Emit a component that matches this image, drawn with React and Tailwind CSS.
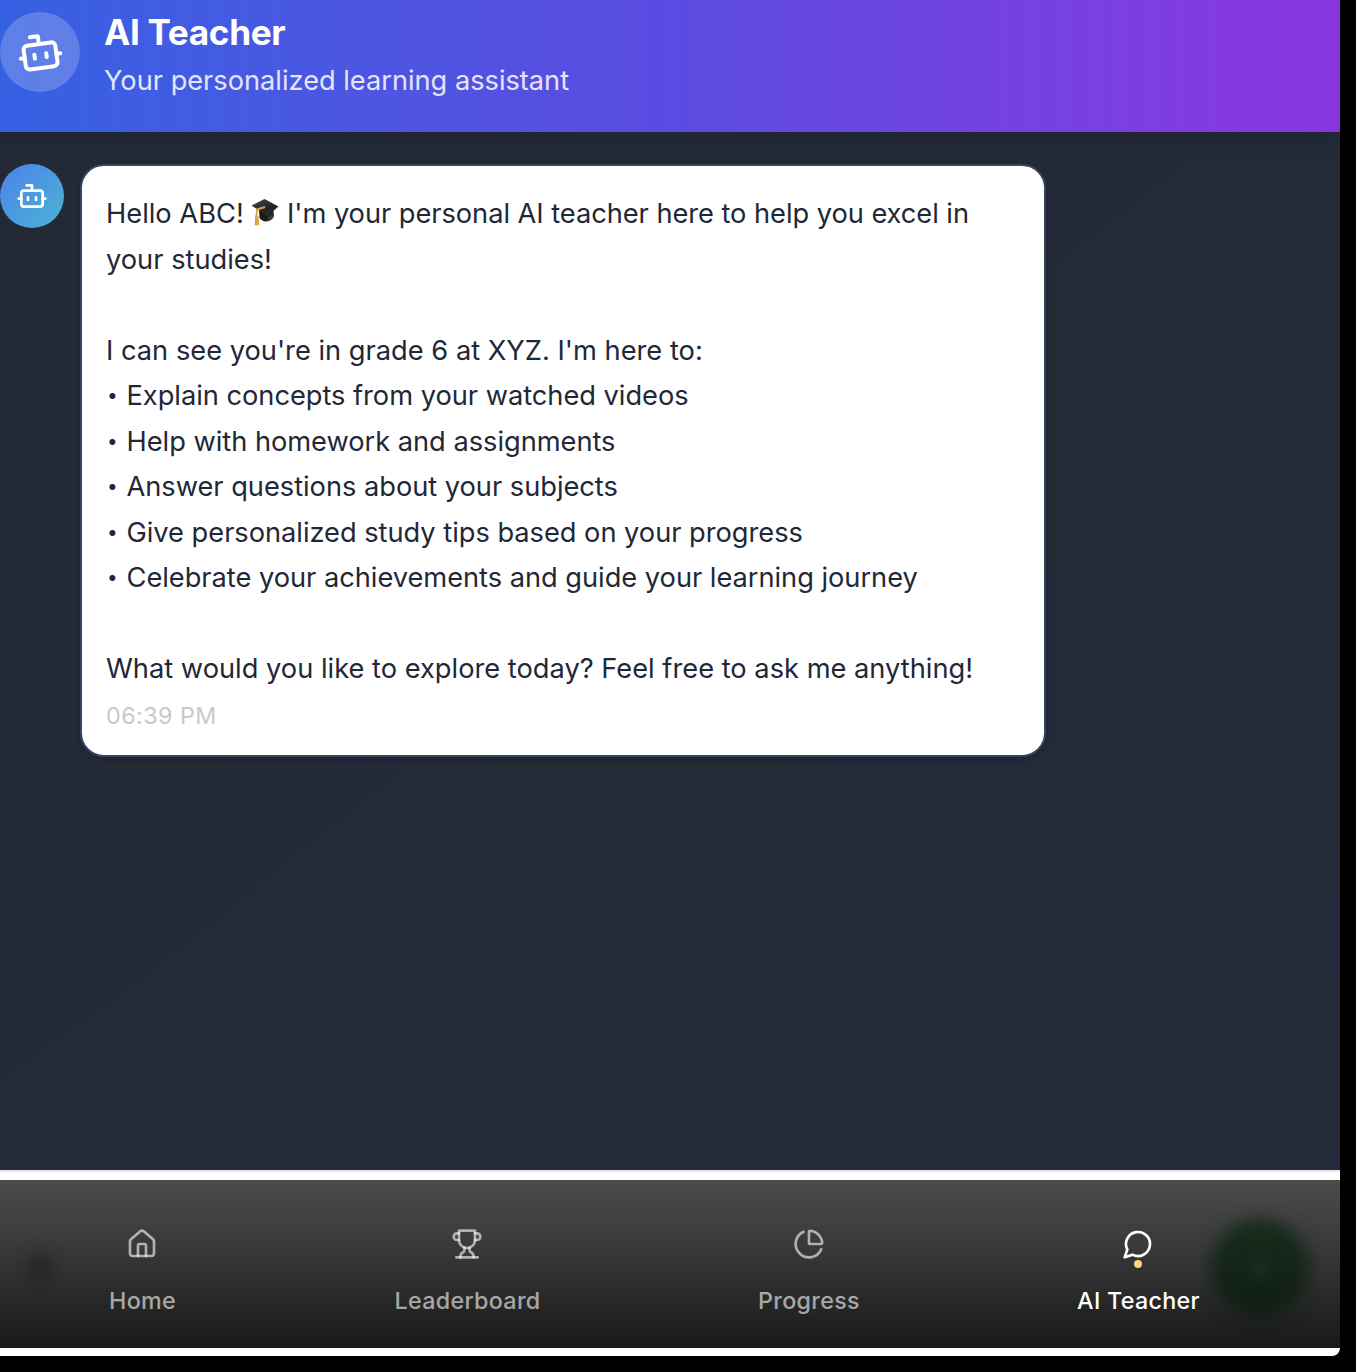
const ICON = {
  fill: "none",
  stroke: "currentColor",
  strokeLinecap: "round",
  strokeLinejoin: "round",
  viewBox: "0 0 24 24",
};

function BotIcon({ className }) {
  return (
    <svg {...ICON} strokeWidth="2" className={className}>
      <path d="M12 8V4H8" />
      <rect width="16" height="12" x="4" y="8" rx="2" />
      <path d="M2 14h2M20 14h2M15 13v2M9 13v2" />
    </svg>
  );
}

function CapIcon() {
  return (
    <svg viewBox="0 0 28 28" className="inline-block h-7 w-7 align-[-3px]">
      <defs>
        <linearGradient id="board" x1="0" y1="0" x2="1" y2="1">
          <stop offset="0" stopColor="#4a4a4a" />
          <stop offset="0.6" stopColor="#222" />
          <stop offset="1" stopColor="#333" />
        </linearGradient>
      </defs>
      <path d="M8 12l.5 8c2 3 6 4 9 3 3-.8 5-3 5-5V11z" fill="#1c1c1c" />
      <path d="M17 19l6-4v3c-1 2-3 4-6 4.500z" fill="#3a3a3a" />
      <path d="M.5 7.500L13.500 1 27.500 8.500 16.500 18z" fill="url(#board)" />
      <path d="M14 9L6 11.500 5.200 20" fill="none" stroke="#d9a03c" strokeWidth="1.900" />
      <path d="M4.200 18h3.300l.7 9.300H3.600z" fill="#dda544" />
    </svg>
  );
}

const tabs = [
  {
    label: "Home",
    box: "w-[284px]",
    icon: (
      <>
        <path d="M15 21v-8a1 1 0 0 0-1-1h-4a1 1 0 0 0-1 1v8" />
        <path d="M3 10a2 2 0 0 1 .709-1.528l7-5.999a2 2 0 0 1 2.582 0l7 5.999A2 2 0 0 1 21 10v9a2 2 0 0 1-2 2H5a2 2 0 0 1-2-2z" />
      </>
    ),
  },
  {
    label: "Leaderboard",
    box: "w-[366px]",
    icon: (
      <>
        <path d="M6 9H4.500a2.500 2.500 0 0 1 0-5H6" />
        <path d="M18 9h1.500a2.500 2.500 0 0 0 0-5H18" />
        <path d="M4 22h16" />
        <path d="M10 14.660V17c0 .55-.47.98-.97 1.210C7.850 18.750 7 20.240 7 22" />
        <path d="M14 14.660V17c0 .55.47.98.97 1.210C16.150 18.750 17 20.240 17 22" />
        <path d="M18 2H6v7a6 6 0 0 0 12 0V2Z" />
      </>
    ),
  },
  {
    label: "Progress",
    box: "w-[317px]",
    icon: (
      <>
        <path d="M21 12c.552 0 1.005-.449.950-.998a10 10 0 0 0-8.953-8.951c-.55-.055-.998.398-.998.950v8a1 1 0 0 0 1 1z" />
        <path d="M21.210 15.890A10 10 0 1 1 8 2.830" />
      </>
    ),
  },
  {
    label: "AI Teacher",
    box: "w-[342px]",
    active: true,
    icon: <path d="M7.9 20A9 9 0 1 0 4 16.100L2 22Z" />,
  },
];

const abilities = [
  "Explain concepts from your watched videos",
  "Help with homework and assignments",
  "Answer questions about your subjects",
  "Give personalized study tips based on your progress",
  "Celebrate your achievements and guide your learning journey",
];

export default function App() {
  return (
    <div className="h-[1372px] w-[1356px] overflow-hidden bg-black font-['Inter',sans-serif]">
      <div className="flex h-[1356px] w-[1340px] flex-col overflow-hidden rounded-br-lg bg-white">
        <header className="z-10 flex h-[132px] shrink-0 gap-6 bg-linear-to-r from-[#3561e3] via-[#5a4be1] to-[#8a36e0] pt-3 text-white shadow-[0_8px_20px_rgba(0,0,0,0.12)]">
          <div className="flex h-20 w-20 items-center justify-center rounded-full bg-white/20">
            <BotIcon className="mr-px h-12 w-12 -rotate-8" />
          </div>
          <div>
            <h1 className="text-[35.2px] leading-[40px] font-bold tracking-[-0.35px]">AI Teacher</h1>
            <p className="mt-[9px] text-[27.2px] leading-[40px] text-white/85">Your personalized learning assistant</p>
          </div>
        </header>

        <main className="flex flex-1 items-start gap-4 bg-linear-to-br from-[#232936] via-[#232b37] to-[#242c3b] pt-8">
          <div className="flex h-16 w-16 items-center justify-center rounded-full bg-linear-to-br from-[#4b80ee] to-[#4db3d0] text-white">
            <BotIcon className="h-8 w-8" />
          </div>
          <div className="h-[593px] w-[966px] rounded-[24px] border-2 border-[#374560] bg-white px-6 pt-[25px] text-[27.25px] leading-[45.5px] whitespace-nowrap text-[#1f2837] shadow-[0_2px_6px_rgba(0,0,0,0.2)]">
            <p className="h-[45.5px]">
              Hello ABC! <CapIcon /> <span className="tracking-[-0.05px]">I'm your personal AI teacher here to help you excel in</span>
            </p>
            <p>your studies!</p>
            <p className="mt-[45.5px]">I can see you're in grade 6 at XYZ. I'm here to:</p>
            <ul>
              {abilities.map((item) => (
                <li key={item} className="flex h-[45.5px] tracking-[-0.03px]">
                  <span className="w-[20.5px] pl-px text-[19px] leading-[45px]">•</span>
                  {item}
                </li>
              ))}
            </ul>
            <p className="mt-[45.5px]">What would you like to explore today? Feel free to ask me anything!</p>
            <p className="mt-2 text-[23.3px] leading-8 tracking-[0.45px] text-[#c8c8c8]">06:39 PM</p>
          </div>
        </main>

        <footer className="shrink-0 border-t-2 border-[#e6e4ec] py-2">
          <nav className="relative flex h-[168px] overflow-hidden bg-linear-to-b from-[#4c4c4c] via-[#333434] to-[#191919] pr-[31px]">
            <div className="absolute top-[39px] left-[1211px] h-[98px] w-[98px] rounded-full bg-linear-to-b from-[#172d1d] to-[#101c12] blur-[8px]" />
            <div className="absolute top-[78px] left-[1250px] h-5 w-5 rounded-full bg-[#1c2c20] blur-[6px]" />
            <div className="absolute top-[76px] left-[28px] h-6 w-6 rounded-full bg-[#222323] blur-[8px]" />
            {tabs.map((t) => (
              <div
                key={t.label}
                className={`relative flex shrink-0 flex-col items-center pt-12 ${t.box} ${t.active ? "text-white" : "text-white/60"}`}
              >
                <svg {...ICON} strokeWidth="2" className="h-8 w-8">{t.icon}</svg>
                {t.active && <span className="absolute top-20 h-2 w-2 rounded-full bg-[#fcd777]" />}
                <span className="mt-[25px] ml-px text-[23.3px] leading-8 font-medium tracking-[0.3px]">{t.label}</span>
              </div>
            ))}
          </nav>
        </footer>
      </div>
    </div>
  );
}
